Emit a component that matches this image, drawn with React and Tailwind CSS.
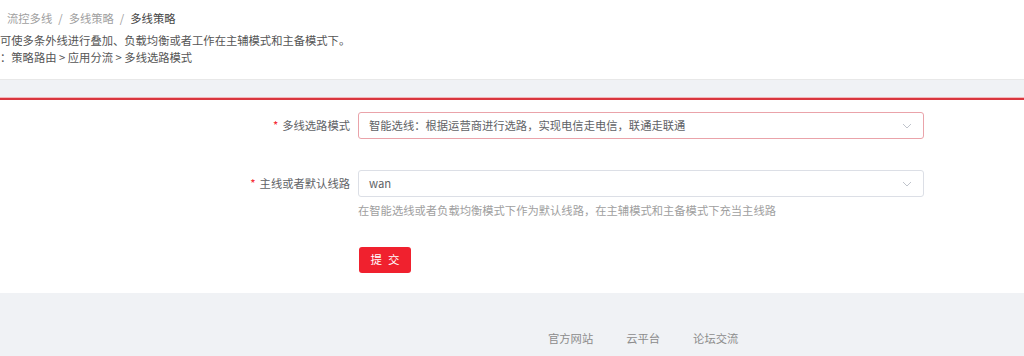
import React from "react";

const font = { fontFamily: '"Noto Sans CJK SC", "Noto Sans", sans-serif' };

function Chevron() {
  return (
    <svg width="12" height="12" viewBox="0 0 12 12" fill="none" className="text-[#c0c4cc]">
      <path d="M2 4l4 4 4-4" stroke="currentColor" strokeWidth="1" />
    </svg>
  );
}

function Field({ label, value, error, help }) {
  return (
    <div className="flex">
      <div className="w-[358px] shrink-0 pr-[8px] h-[27px] flex items-center justify-end text-[11.3px] text-[#606266]">
        <span className="text-[#f5222d] mr-[4px]">*</span>
        {label}
      </div>
      <div className="w-[566px]">
        <div
          className={
            "h-[27px] rounded-[3px] border flex items-center justify-between pl-[10px] pr-[10px] text-[11.3px] text-[#606266] bg-white " +
            (error ? "border-[#eaa3aa]" : "border-[#dcdfe6]")
          }
        >
          <span>{value}</span>
          <Chevron />
        </div>
        {help && <div className="mt-[5px] text-[11.3px] text-[#a0a0a0]">{help}</div>}
      </div>
    </div>
  );
}

export default function App() {
  return (
    <div className="w-[1024px] h-[356px] overflow-hidden bg-white" style={font}>
      {/* header */}
      <div className="h-[79px] pt-[10px] text-[11.3px] leading-[17px]">
        <div className="pl-[7px] text-[#a0a0a0]">
          流控多线<span className="mx-[6px]">/</span>多线策略<span className="mx-[6px]">/</span>
          <span className="text-[#444]">多线策略</span>
        </div>
        <div className="mt-[5px] text-[#555]">可使多条外线进行叠加、负载均衡或者工作在主辅模式和主备模式下。</div>
        <div className="text-[#555]">：策略路由 &gt; 应用分流 &gt; 多线选路模式</div>
      </div>
      <div className="h-[18px] bg-[#f0f2f5] border-t border-[#e8e8e8]" />
      <div className="h-[1px] bg-[#f3b7bb]" />
      <div className="h-[2px] bg-[#d9363e]" />

      {/* form */}
      <div className="h-[193px] pt-[12px]">
        <Field
          label="多线选路模式"
          value="智能选线：根据运营商进行选路，实现电信走电信，联通走联通"
          error
        />
        <div className="mt-[31px]">
          <Field
            label="主线或者默认线路"
            value="wan"
            help="在智能选线或者负载均衡模式下作为默认线路，在主辅模式和主备模式下充当主线路"
          />
        </div>
        <div className="pl-[359px] mt-[28px]">
          <button className="w-[52px] h-[26px] rounded-[3px] bg-[#f0212e] text-white text-[11.5px] flex items-center justify-center gap-[6px]">
            <span>提</span>
            <span>交</span>
          </button>
        </div>
      </div>

      {/* footer */}
      <div className="h-[63px] bg-[#f0f2f5] flex items-end pb-[9px] pl-[548px] gap-[33px] text-[11.3px] text-[#8c8c8c]">
        <span>官方网站</span>
        <span>云平台</span>
        <span>论坛交流</span>
      </div>
    </div>
  );
}
